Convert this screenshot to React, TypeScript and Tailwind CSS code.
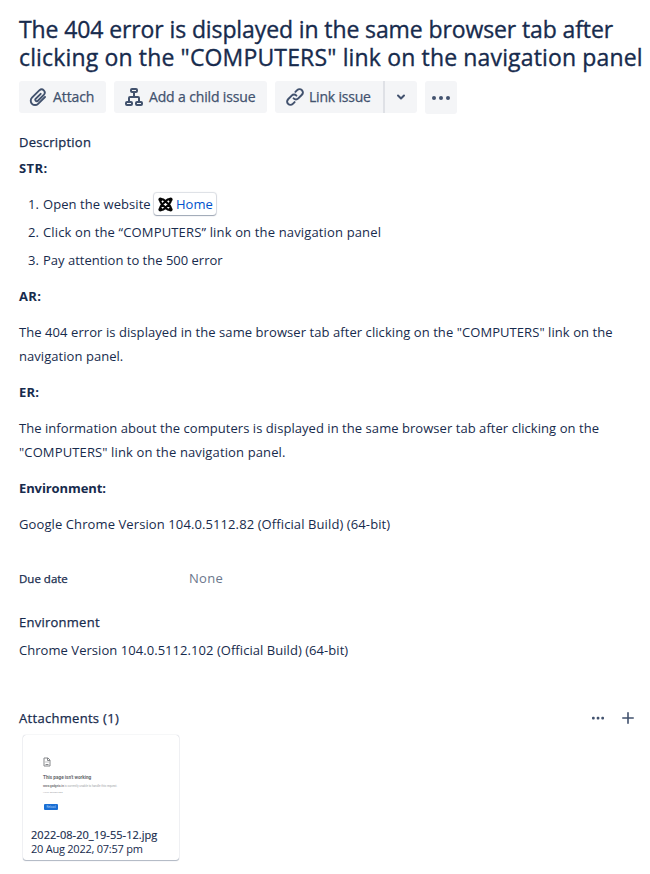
import type { ReactNode } from "react";

function Paperclip() {
  return (
    <svg width="18" height="20" viewBox="0 0 18 20" fill="none" stroke="#42526E" strokeWidth="1.9" strokeLinecap="round">
      <path d="M11.700 6.800 6.600 11.900a1.500 1.500 0 0 0 2.100 2.100l6.300-6.300a3.200 3.200 0 0 0-4.500-4.500L3 10.700a4.300 4.300 0 0 0 6.100 6.100l6.900-6.800" />
    </svg>
  );
}

function ChildIssue() {
  return (
    <svg width="18" height="18" viewBox="0 0 18 18" fill="none" stroke="#42526E" strokeWidth="2">
      <rect x="6" y="1" width="6" height="3" rx="1" />
      <rect x="1" y="14" width="6" height="3" rx="1" />
      <rect x="11" y="14" width="6" height="3" rx="1" />
      <path d="M9 4v5M4 14v-4a1 1 0 0 1 1-1h8a1 1 0 0 1 1 1v4" />
    </svg>
  );
}

function LinkIcon() {
  return (
    <svg width="18" height="18" viewBox="0 0 18 18" fill="none" stroke="#42526E" strokeWidth="2" strokeLinecap="round">
      <path d="M7.600 10.400a3.300 3.300 0 0 0 4.700 0l3.600-3.600a3.300 3.300 0 0 0-4.700-4.700L9.400 3.900" />
      <path d="M10.400 7.600a3.300 3.300 0 0 0-4.700 0l-3.600 3.600a3.300 3.300 0 0 0 4.700 4.700l1.800-1.800" />
    </svg>
  );
}

function Joomla() {
  return (
    <svg width="15" height="15" viewBox="0 0 15 15" fill="none" stroke="#050505" strokeWidth="2.200">
      <path d="M2.300 2.300C1.800 4.600 2.600 5.800 4 7.200l3.800 3.800c1.500 1.500 3 2.200 4.900 1.700M12.700 2.300c-2.300-.5-3.500.3-4.900 1.700L4 7.800c-1.500 1.500-2.200 3-1.700 4.900M2.300 2.300c2.300-.5 3.500.3 4.900 1.700L11 7.800c1.500 1.500 2.200 3 1.700 4.900M12.700 2.300c.5 2.300-.3 3.500-1.700 4.900L7.200 11c-1.500 1.500-3 2.200-4.900 1.700" />
      <g fill="#050505" stroke="none">
        <circle cx="2.400" cy="2.400" r="2" />
        <circle cx="12.600" cy="2.400" r="2" />
        <circle cx="2.400" cy="12.600" r="2" />
        <circle cx="12.600" cy="12.600" r="2" />
      </g>
    </svg>
  );
}

function Toolbar() {
  return (
    <div className="mt-2.5 flex h-8 items-start text-sm font-medium whitespace-nowrap text-[#42526E] [-webkit-text-stroke:0.25px]">
      <button className="flex h-8 w-[87px] items-center rounded-[3px] bg-[#F4F5F7] pl-2.5">
        <Paperclip />
        <span className="ml-1.5 tracking-[-0.1px]">Attach</span>
      </button>
      <button className="ml-2 flex h-8 w-[153px] items-center rounded-[3px] bg-[#F4F5F7] pl-[11px]">
        <ChildIssue />
        <span className="ml-1.5 tracking-[-0.15px]">Add a child issue</span>
      </button>
      <button className="ml-2 flex h-8 w-[108px] items-center rounded-l-[3px] bg-[#F4F5F7] pl-[11px]">
        <LinkIcon />
        <span className="ml-[5px] tracking-[-0.2px]">Link issue</span>
      </button>
      <span className="h-8 w-0.5 bg-[#DFE1E6]" />
      <button className="flex h-8 w-8 items-center justify-center rounded-r-[3px] bg-[#F4F5F7]">
        <svg width="10" height="8" viewBox="0 0 10 8" fill="none" stroke="#42526E" strokeWidth="2" strokeLinecap="round" strokeLinejoin="round">
          <path d="M2 2.500 5 5.500 8 2.500" />
        </svg>
      </button>
      <button className="ml-2 flex h-[33px] w-8 items-center justify-center gap-[3px] rounded-[3px] bg-[#F4F5F7] pt-px">
        <i className="h-1 w-1 rounded-full bg-[#42526E]" />
        <i className="h-1 w-1 rounded-full bg-[#42526E]" />
        <i className="h-1 w-1 rounded-full bg-[#42526E]" />
      </button>
    </div>
  );
}

function Heading({ children }: { children: ReactNode }) {
  return <p className="mt-3 font-bold tracking-[-0.1px]">{children}</p>;
}

function AttachmentCard() {
  return (
    <div className="ml-1 mt-[5px] h-[125px] w-[156px] rounded-[3px] bg-white pt-[22px] shadow-[0_1px_1px_rgba(9,30,66,0.3),0_0_1px_rgba(9,30,66,0.35)]">
      <div className="ml-5 h-[71px] whitespace-nowrap font-['Roboto',sans-serif]">
        <svg width="8" height="10" viewBox="0 0 8 10" fill="none" stroke="#85878a" strokeWidth="1">
          <path d="M1 1h4l2 2v6H1zM4.500 1v2.500H7M2.500 5h1M4.500 5h1M2.500 7.500h3" />
        </svg>
        <p className="mt-[8px] text-[4.700px] leading-[6px] font-bold text-[#66696d]">This page isn't working</p>
        <p className="mt-[3px] text-[2.900px] leading-[4px] text-[#a2a4a7]">
          <b className="text-[#77797c]">www.gadgets.in</b> is currently unable to handle this request.
        </p>
        <p className="mt-[3px] text-[2.500px] leading-[4px] text-[#a2a4a7]">HTTP ERROR 500</p>
        <div className="mt-[9px] ml-px flex h-[6px] w-[14px] items-center justify-center rounded-[1px] bg-[#1a6fd4] text-[3px] text-[#a8cdf5]">Reload</div>
      </div>
      <div className="ml-2 text-[11px] leading-[14px] whitespace-nowrap">
        <p className="tracking-[0.04px] [-webkit-text-stroke:0.15px]">2022-08-20_19-55-12.jpg</p>
        <p className="tracking-[-0.24px]">20 Aug 2022, 07:57 pm</p>
      </div>
    </div>
  );
}

export default function App() {
  return (
    <main className="h-[874px] w-[650px] overflow-hidden bg-white pl-[19px] pt-[15px] font-['Open_Sans','Noto_Sans',sans-serif] text-[13px] leading-6 text-[#172B4D]">
      <h1 className="text-[23px] leading-7 font-medium whitespace-nowrap [-webkit-text-stroke:0.35px]">
        <span className="block tracking-[-0.11px]">The 404 error is displayed in the same browser tab after</span>
        <span className="block tracking-[0.15px]">clicking on the "COMPUTERS" link on the navigation panel</span>
      </h1>
      <Toolbar />
      <section className="mt-[17px] whitespace-nowrap">
        <h2 className="font-medium tracking-[0.25px] [-webkit-text-stroke:0.25px]">Description</h2>
        <p className="mt-0.5 font-bold tracking-[0.4px]">STR:</p>
        <ol className="mt-3 space-y-1">
          <li className="flex h-6 items-center pl-[9px]">
            <span className="w-[15px]">1.</span>
            <span className="w-[111px] tracking-[0.06px]">Open the website</span>
            <a className="flex h-[22px] w-[62px] items-center rounded-[3px] pl-[4px] text-[#0052CC] shadow-[0_1px_1px_rgba(9,30,66,0.3),0_0_1px_1px_rgba(9,30,66,0.14)]">
              <Joomla />
              <span className="ml-[3px]">Home</span>
            </a>
          </li>
          <li className="flex pl-[9px]">
            <span className="w-[15px]">2.</span>
            <span className="tracking-[0.15px]">Click on the “COMPUTERS” link on the navigation panel</span>
          </li>
          <li className="flex pl-[9px]">
            <span className="w-[15px]">3.</span>
            <span>Pay attention to the 500 error</span>
          </li>
        </ol>
        <p className="mt-3 font-bold tracking-[0.4px]">AR:</p>
        <p className="mt-3">
          <span className="block tracking-[0.07px]">The 404 error is displayed in the same browser tab after clicking on the "COMPUTERS" link on the</span>
          <span className="block tracking-[0.05px]">navigation panel.</span>
        </p>
        <p className="mt-3 font-bold tracking-[0.2px]">ER:</p>
        <p className="mt-3">
          <span className="block tracking-[0.05px]">The information about the computers is displayed in the same browser tab after clicking on the</span>
          <span className="block tracking-[0.13px]">"COMPUTERS" link on the navigation panel.</span>
        </p>
        <Heading>Environment:</Heading>
        <p className="mt-3 tracking-[0.1px]">Google Chrome Version 104.0.5112.82 (Official Build) (64-bit)</p>
      </section>
      <section className="mt-[30px] flex">
        <h2 className="w-[170px] pt-px text-[11.500px] leading-6 font-medium [-webkit-text-stroke:0.25px]">Due date</h2>
        <p className="tracking-[0.3px] text-[#6B778C]">None</p>
      </section>
      <section className="mt-[19px]">
        <h2 className="font-medium tracking-[0.25px] [-webkit-text-stroke:0.25px]">Environment</h2>
        <p className="mt-1 tracking-[0.05px]">Chrome Version 104.0.5112.102 (Official Build) (64-bit)</p>
      </section>
      <section className="mt-11">
        <header className="flex h-6 items-center">
          <h2 className="w-[573px] font-medium tracking-[0.3px] [-webkit-text-stroke:0.25px]">Attachments (1)</h2>
          <svg width="12" height="4" viewBox="0 0 12 4" fill="#42526E">
            <rect x="0" y="0.700" width="2.700" height="2.700" rx="1" />
            <rect x="4.700" y="0.700" width="2.700" height="2.700" rx="1" />
            <rect x="9.300" y="0.700" width="2.700" height="2.700" rx="1" />
          </svg>
          <svg className="ml-[18px]" width="12" height="12" viewBox="0 0 12 12" stroke="#42526E" strokeWidth="1.600" strokeLinecap="round">
            <path d="M6 .8v10.400M.8 6h10.400" />
          </svg>
        </header>
        <AttachmentCard />
      </section>
    </main>
  );
}
